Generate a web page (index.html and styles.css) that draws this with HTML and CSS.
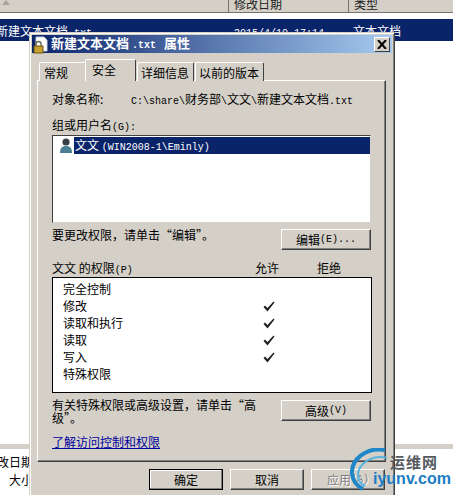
FILE: index.html
```html
<!doctype html>
<html>
<head>
<meta charset="utf-8">
<title>新建文本文档.txt 属性</title>
<link rel="stylesheet" href="styles.css">
</head>
<body>

<div class="explorer">
	<div class="colhead">
		<div class="col col-name"><svg width="8" height="5" class="sort"><path d="M0 5 L4 0 L8 5 Z" fill="#a8a49c"/></svg></div>
		<div class="col col-date">修改日期</div>
		<div class="col col-type">类型</div>
	</div>
	<div class="filerow">
		<div class="cell-name">新建文本文档<span class="lat">.txt</span></div>
		<div class="cell-date"><span class="lat">2015/4/10 17:14</span></div>
		<div class="cell-type">文本文档</div>
	</div>
	<div class="details">
		<div class="strip"></div>
		<div class="detail-lines">
			<div>改日期</div>
			<div class="detail-size">大小</div>
		</div>
	</div>
</div>

<div class="dialog">
	<div class="titlebar">
		<svg class="titleicon" width="16" height="18" viewBox="0 0 16 18">
			<path d="M3 1 H11 L14 4 V15 H3 Z" fill="#fff" stroke="#c8d0e0"/>
			<rect x="1" y="10" width="9" height="7" fill="#c8a030" stroke="#6a5410"/>
			<path d="M3 10 V8 A2.5 2.5 0 0 1 8 8 V10" fill="none" stroke="#6a6a50" stroke-width="1.4"/>
		</svg>
		<span class="titletext">新建文本文档<span class="lat-title">.txt</span>属性</span>
		<div class="closebtn"><svg width="10" height="9" viewBox="0 0 10 9"><path d="M1 0 L9 9 M9 0 L1 9" stroke="#000" stroke-width="2"/></svg></div>
	</div>

	<div class="tabs">
		<div class="tab tab-first">常规</div>
		<div class="tab tab-on">安全</div>
		<div class="tab">详细信息</div>
		<div class="tab">以前的版本</div>
	</div>

	<div class="panel">
		<div class="objrow">
			<span class="objlabel">对象名称:</span>
			<span class="objpath"><span class="lat">C:\share\</span>财务部<span class="lat">\</span>文文<span class="lat">\</span>新建文本文档<span class="lat">.txt</span></span>
		</div>
		<div class="grouplabel">组或用户名<span class="lat">(G):</span></div>
		<div class="userlist">
			<div class="userrow">
				<svg class="usericon" width="14" height="17" viewBox="0 0 14 17">
					<circle cx="7" cy="5" r="3.6" fill="#3a4048"/>
					<path d="M1 16 C1 10 4 9 7 9 C10 9 13 10 13 16 Z" fill="#4a7f94"/>
				</svg>
				<div class="username">文文 <span class="lat">(WIN2008-1\Eminly)</span></div>
			</div>
		</div>
		<div class="actionrow">
			<div class="actiontext">要更改权限，请单击“编辑”。</div>
			<div class="btn btn-side">编辑<span class="lat">(E)...</span></div>
		</div>

		<div class="permhead">
			<div class="permtitle">文文 的权限<span class="lat">(P)</span></div>
			<div class="permallow">允许</div>
			<div class="permdeny">拒绝</div>
		</div>
		<div class="permlist">
			<div class="permrow">完全控制</div>
			<div class="permrow">修改<svg class="check" width="12" height="11" viewBox="0 0 12 11"><path d="M0.5 6 L2 4.5 L4.5 7 L10.5 0.5 L11.5 1.5 L4.5 10.5 Z" fill="#222"/></svg></div>
			<div class="permrow">读取和执行<svg class="check" width="12" height="11" viewBox="0 0 12 11"><path d="M0.5 6 L2 4.5 L4.5 7 L10.5 0.5 L11.5 1.5 L4.5 10.5 Z" fill="#222"/></svg></div>
			<div class="permrow">读取<svg class="check" width="12" height="11" viewBox="0 0 12 11"><path d="M0.5 6 L2 4.5 L4.5 7 L10.5 0.5 L11.5 1.5 L4.5 10.5 Z" fill="#222"/></svg></div>
			<div class="permrow">写入<svg class="check" width="12" height="11" viewBox="0 0 12 11"><path d="M0.5 6 L2 4.5 L4.5 7 L10.5 0.5 L11.5 1.5 L4.5 10.5 Z" fill="#222"/></svg></div>
			<div class="permrow">特殊权限</div>
		</div>
		<div class="actionrow actionrow-adv">
			<div class="actiontext actiontext-adv">有关特殊权限或高级设置，请单击“高级”。</div>
			<div class="btn btn-side">高级<span class="lat">(V)</span></div>
		</div>
		<div class="helplink">了解访问控制和权限</div>
	</div>

	<div class="footer">
		<div class="btn btn-foot btn-default">确定</div>
		<div class="btn btn-foot">取消</div>
		<div class="btn btn-foot btn-off">应用<span class="lat">(A)</span></div>
	</div>
</div>

<div class="watermark">
	<svg class="wm-arc" width="46" height="47" viewBox="0 0 46 47">
		<path d="M35 2 C15 -1 1 12 2 26 C3 33 7 38 13 41" fill="none" stroke="#1f86c8" stroke-width="4"/>
		<path d="M37 10 C22 6 8 16 8 27 C8 32 11 36 15 38" fill="none" stroke="#58b4e0" stroke-width="2"/>
	</svg>
	<div class="wm-cn">运维网</div>
	<div class="wm-en">iyunv.com</div>
</div>

</body>
</html>
```

FILE: styles.css
```css
html, body {
	margin: 0;
	padding: 0;
}

body {
	position: relative;
	width: 453px;
	height: 495px;
	overflow: hidden;
	background: #fff;
	color: #000;
	font-family: "Noto Sans CJK SC", "Liberation Sans", sans-serif;
	font-size: 12px;
	line-height: 14px;
}

.lat {
	font-family: "Liberation Mono", monospace;
	font-size: 10px;
}

/* explorer behind the dialog */
.explorer {
	display: flex;
	flex-direction: column;
	height: 495px;
}

.colhead {
	display: flex;
	height: 12px;
	background: #d4d0c8;
	border-bottom: 1px solid #77746c;
	overflow: hidden;
}

.col {
	border-left: 1px solid #77746c;
	font-size: 12px;
	line-height: 8px;
	padding-left: 6px;
}

.col-name {
	width: 226px;
	border-left: 0;
	padding-left: 2px;
}

.sort {
	display: block;
}

.col-date {
	width: 114px;
	padding-left: 5px;
	color: #222;
}

.col-type {
	flex: 1;
	padding-left: 5px;
	color: #222;
}

.filerow {
	display: flex;
	margin-top: 6px;
	height: 22px;
	background: #0a246a;
	color: #fff;
	line-height: 23px;
}

.cell-name {
	width: 238px;
	margin-left: -4px;
}

.cell-date {
	width: 119px;
}

.details {
	margin-top: 403px;
}

.strip {
	height: 5px;
	background: #d4d0c8;
}

.detail-lines {
	padding-top: 4px;
	line-height: 18px;
}

.detail-lines div {
	margin-left: -3px;
}

.detail-lines .detail-size {
	margin-left: 9px;
}

/* dialog window */
.dialog {
	position: absolute;
	left: 29px;
	top: 32px;
	width: 360px;
	height: 480px;
	padding: 2px;
	background: #d4d0c8;
	border-left: 1px solid #d4d0c8;
	border-top: 1px solid #d4d0c8;
	border-right: 1px solid #404040;
	box-shadow: inset 1px 1px 0 #fff, inset -1px 0 0 #808080;
}

.titlebar {
	display: flex;
	align-items: center;
	height: 18px;
	padding: 0 2px 0 1px;
	background: linear-gradient(to right, #0a246a, #a6caf0);
	color: #fff;
	font-weight: bold;
	font-size: 13px;
}

.titleicon {
	flex: none;
	margin-top: 1px;
}

.titletext {
	margin-left: 2px;
	flex: 1;
	white-space: nowrap;
}

.lat-title {
	margin: 0 8px 0 3px;
	font-family: "Liberation Mono", monospace;
	font-size: 10px;
	font-weight: bold;
}

.closebtn {
	display: flex;
	align-items: center;
	justify-content: center;
	width: 14px;
	height: 13px;
	background: #d4d0c8;
	border: 1px solid;
	border-color: #fff #404040 #404040 #fff;
}

.tabs {
	display: flex;
	align-items: flex-end;
	height: 28px;
	padding-left: 7px;
	position: relative;
	z-index: 1;
	margin-bottom: -1px;
}

.tab {
	height: 18px;
	padding: 0 4px 0 3px;
	margin-left: 1px;
	line-height: 19px;
	font-size: 12px;
	background: #d4d0c8;
	border: 1px solid #fff;
	border-bottom: 0;
	border-right: 1px solid #404040;
	border-radius: 2px 2px 0 0;
	white-space: nowrap;
}

.tab-first {
	width: 39px;
	padding: 0 2px 0 4px;
	margin-left: 0;
}

.tab-on {
	width: 41px;
	height: 21px;
	line-height: 20px;
	padding: 0 2px 0 6px;
	margin-left: -1px;
	position: relative;
}

.panel {
	width: 349px;
	height: 382px;
	box-sizing: border-box;
	margin-left: 5px;
	padding: 9px 14px 0 14px;
	border: 1px solid;
	border-color: #fff #404040 #404040 #fff;
	box-shadow: inset -1px -1px 0 #808080;
}

.objrow {
	display: flex;
	height: 18px;
	line-height: 18px;
}

.objlabel {
	width: 79px;
}

.grouplabel {
	margin-top: 11px;
	height: 12px;
	line-height: 12px;
}

.userlist {
	margin-top: 4px;
	width: 319px;
	height: 88px;
	box-sizing: border-box;
	background: #fff;
	border: 1px solid;
	border-color: #404040 #d4d0c8 #d4d0c8 #404040;
}

.userrow {
	display: flex;
	height: 17px;
	margin-top: 1px;
}

.usericon {
	margin-left: 6px;
	margin-right: 1px;
	flex: none;
}

.username {
	flex: 1;
	background: #0a246a;
	color: #fff;
	padding-left: 1px;
	line-height: 15px;
}

.actionrow {
	display: flex;
	justify-content: space-between;
	margin-top: 6px;
	width: 319px;
	height: 21px;
}

.actiontext {
	width: 225px;
	line-height: 12px;
}

.btn {
	display: flex;
	align-items: center;
	justify-content: center;
	box-sizing: border-box;
	background: #d4d0c8;
	border: 1px solid;
	border-color: #fff #404040 #404040 #fff;
	box-shadow: inset -1px -1px 0 #808080;
}

.btn-side {
	width: 90px;
	height: 21px;
}

.permhead {
	display: flex;
	margin-top: 11px;
	height: 14px;
}

.permtitle {
	width: 203px;
}

.permallow {
	width: 62px;
}

.permlist {
	width: 320px;
	height: 116px;
	box-sizing: border-box;
	margin-top: 2px;
	padding-top: 2px;
	background: #fff;
	border: 1px solid #000;
}

.permrow {
	position: relative;
	height: 17px;
	padding-left: 10px;
	line-height: 17px;
}

/* ticks sit over the row, in the allow column */
.check {
	position: absolute;
	left: 210px;
	top: 4px;
}

.actionrow-adv {
	margin-top: 7px;
	height: 26px;
}

.actiontext-adv {
	margin-top: -2px;
	line-height: 13px;
}

.helplink {
	margin-top: 9px;
	color: #00009c;
	text-decoration: underline;
}

.footer {
	display: flex;
	gap: 7px;
	padding: 7px 0 0 117px;
}

.btn-foot {
	width: 74px;
	height: 21px;
}

.btn-default {
	border-color: #000;
	box-shadow: inset -1px -1px 0 #808080, inset 1px 1px 0 #fff;
}

.btn-off {
	color: #808080;
	text-shadow: 1px 1px 0 #fff;
}

/* site watermark stamped over the screenshot */
.watermark {
	position: absolute;
	left: 350px;
	top: 448px;
	width: 103px;
	height: 47px;
}

.wm-arc {
	position: absolute;
	left: 0;
	top: 0;
}

.wm-cn {
	position: absolute;
	left: 40px;
	top: 5px;
	color: #555a60;
	font-size: 15px;
	font-weight: bold;
	line-height: 18px;
	letter-spacing: 1px;
}

.wm-en {
	position: absolute;
	left: 23px;
	top: 22px;
	color: #1c7cc4;
	font-family: "Liberation Sans", sans-serif;
	font-size: 16px;
	font-weight: bold;
	line-height: 18px;
}
```
